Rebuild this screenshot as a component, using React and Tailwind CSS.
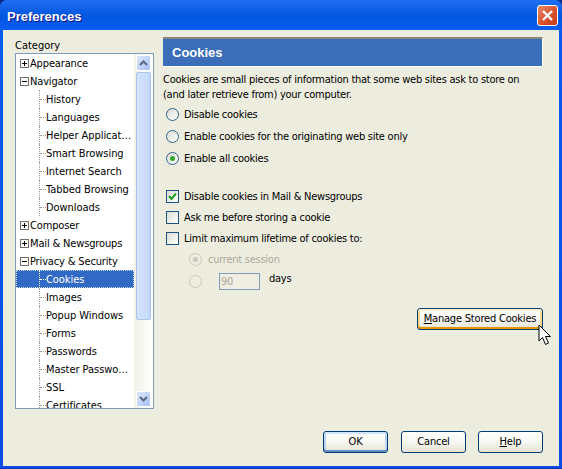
function Radio({ on, off }) {
  return (
    <span className={`relative block w-[13px] h-[13px] rounded-full border shrink-0 ${off ? "border-[#cac8bb] bg-[#ededdf]" : "border-[#2c628b] bg-gradient-to-br from-[#dcdcd3] to-white"}`}>
      {on && <span className={`absolute left-[3px] top-[3px] w-[5px] h-[5px] rounded-full ${off ? "bg-[#cac8bb]" : "bg-[#2fa82f]"}`} />}
    </span>
  );
}

function Check({ on }) {
  return (
    <span className="block w-[13px] h-[13px] border border-[#1c5180] bg-gradient-to-br from-[#dcdcd3] to-white shrink-0">
      {on && (
        <svg viewBox="0 0 11 11" className="w-[11px] h-[11px]">
          <path d="M2 5 L4.5 8 L9 2.5" fill="none" stroke="#21a121" strokeWidth="2" />
        </svg>
      )}
    </span>
  );
}

function Btn({ children, className = "" }) {
  return (
    <button className={`h-[22px] rounded-[3px] border border-[#003c74] text-[11px] text-black tracking-[-0.2px] bg-gradient-to-b from-white via-[#f7f7f2] to-[#e6e3d4] flex items-center justify-center whitespace-nowrap ${className}`}>
      {children}
    </button>
  );
}

function Box({ plus }) {
  return (
    <span className="relative block w-[9px] h-[9px] border border-[#6f6f6f] bg-white shrink-0">
      <span className="absolute left-[1px] top-[3px] w-[5px] h-px bg-black" />
      {plus && <span className="absolute left-[3px] top-[1px] w-px h-[5px] bg-black" />}
    </span>
  );
}

function Parent({ label, plus }) {
  return (
    <div className="h-[18px] flex items-center pl-[4px] gap-[1px] text-black">
      <Box plus={plus} />
      <span className="whitespace-nowrap pt-[2px] tracking-[-0.15px]">{label}</span>
    </div>
  );
}

function Child({ label, selected }) {
  return (
    <div className={`h-[18px] flex items-center ${selected ? "bg-[#316ac5] text-white outline-1 -outline-offset-1 outline-dotted outline-[#c9d8f0]" : "text-black"}`}>
      <span className="w-[23px] h-full shrink-0" />
      <span className={`w-[7px] h-full shrink-0 border-l border-dotted ${selected ? "border-white" : "border-[#a0a0a0]"} relative`}>
        <span className={`absolute left-0 top-[9px] w-[6px] border-t border-dotted ${selected ? "border-white" : "border-[#a0a0a0]"}`} />
      </span>
      <span className="whitespace-nowrap pt-[2px] tracking-[-0.05px]">{label}</span>
    </div>
  );
}

function Scrollbar() {
  const arrow = (d) => (
    <span className="block w-[15px] h-[16px] rounded-[2px] border border-white bg-gradient-to-br from-[#dce7fd] to-[#a9c3f3] flex items-center justify-center shrink-0">
      <svg viewBox="0 0 9 6" className="w-[9px] h-[6px]">
        <path d={d} fill="none" stroke="#5a6a80" strokeWidth="2" />
      </svg>
    </span>
  );
  return (
    <div className="w-[19px] h-full bg-gradient-to-r from-[#f1f1e8] to-white flex flex-col items-start pl-[2px] py-[1px] shrink-0">
      {arrow("M1 5 L4.5 1.5 L8 5")}
      <div className="w-[15px] h-[248px] mt-px rounded-[2px] border border-[#a9c3ef] bg-gradient-to-r from-[#d5e3fd] to-[#c6d9fb] shrink-0" />
      <div className="flex-1" />
      {arrow("M1 1 L4.5 4.5 L8 1")}
    </div>
  );
}

export default function App() {
  return (
    <div className="w-[562px] h-[469px] bg-[#0a2a8a]">
      <div className="font-['DejaVu_Sans_Condensed','DejaVu_Sans',sans-serif] w-full h-full bg-gradient-to-b from-[#0a5cf0] to-[#0a4be6] rounded-t-[7px] flex flex-col overflow-hidden text-[11px] text-black border-b border-b-[#0a2fb8]">
        <div className="h-[30px] shrink-0 bg-gradient-to-b from-[#1f6ff0] via-[#0256e0] to-[#0a5cf0] flex items-center justify-between pl-[7px] pr-[4px]">
          <span className="font-['Liberation_Sans',sans-serif] text-white font-bold text-[13px] pt-[3px] [text-shadow:1px_1px_#0f1089]">Preferences</span>
          <span className="w-[21px] h-[21px] rounded-[3px] border border-white bg-gradient-to-br from-[#e68b6c] via-[#d9562f] to-[#c63a15] flex items-center justify-center">
            <svg viewBox="0 0 13 13" className="w-[13px] h-[13px]">
              <path d="M2 2 L11 11 M11 2 L2 11" stroke="white" strokeWidth="2.4" />
            </svg>
          </span>
        </div>

        <div className="mx-[3px] mb-[2px] flex-1 min-h-0 bg-[#ededdf] flex flex-col pl-[12px] pr-[16px]">
          <div className="flex gap-[9px] pt-[7px]">
            <div className="w-[139px] shrink-0 pt-[1px]">
              <div className="h-[15px] leading-[15px]">Category</div>
              <div className="h-[356px] border border-[#7f9db9] bg-white flex overflow-hidden">
                <div className="flex-1 min-w-0 overflow-hidden">
                  <Parent label="Appearance" plus />
                  <Parent label="Navigator" />
                  <Child label="History" />
                  <Child label="Languages" />
                  <Child label="Helper Applicat…" />
                  <Child label="Smart Browsing" />
                  <Child label="Internet Search" />
                  <Child label="Tabbed Browsing" />
                  <Child label="Downloads" />
                  <Parent label="Composer" plus />
                  <Parent label="Mail & Newsgroups" plus />
                  <Parent label="Privacy & Security" />
                  <Child label="Cookies" selected />
                  <Child label="Images" />
                  <Child label="Popup Windows" />
                  <Child label="Forms" />
                  <Child label="Passwords" />
                  <Child label="Master Passwo…" />
                  <Child label="SSL" />
                  <Child label="Certificates" />
                </div>
                <Scrollbar />
              </div>
            </div>

            <div className="flex-1 min-w-0 tracking-[-0.25px]">
              <div className="h-[30px] bg-[#3b6db8] border-t-2 border-t-[#8a867a] border-b border-b-white border-r border-r-white flex items-center pl-[9px] text-white font-bold text-[13px] tracking-normal font-['Liberation_Sans',sans-serif]">
                Cookies
              </div>
              <p className="mt-[5px] leading-[15px] whitespace-nowrap">
                Cookies are small pieces of information that some web sites ask to store on<br />
                (and later retrieve from) your computer.
              </p>
              <div className="mt-[6px] pl-[3px] flex flex-col gap-[9px]">
                <label className="flex items-center h-[13px] gap-[5px]"><Radio /><span className="pt-[1px]">Disable cookies</span></label>
                <label className="flex items-center h-[13px] gap-[5px]"><Radio /><span className="pt-[1px]">Enable cookies for the originating web site only</span></label>
                <label className="flex items-center h-[13px] gap-[5px]"><Radio on /><span className="pt-[1px]">Enable all cookies</span></label>
              </div>
              <div className="mt-[25px] pl-[3px] flex flex-col gap-[8px]">
                <label className="flex items-center h-[13px] gap-[5px]"><Check on /><span className="pt-[1px]">Disable cookies in Mail & Newsgroups</span></label>
                <label className="flex items-center h-[13px] gap-[5px]"><Check /><span className="pt-[1px]">Ask me before storing a cookie</span></label>
                <label className="flex items-center h-[13px] gap-[5px]"><Check /><span className="pt-[1px]">Limit maximum lifetime of cookies to:</span></label>
              </div>
              <div className="mt-[8px] pl-[26px] flex flex-col gap-[9px]">
                <label className="flex items-center h-[13px] gap-[6px] text-[#aca899]"><Radio on off /><span className="pt-[1px]">current session</span></label>
                <label className="flex items-center h-[13px]">
                  <Radio off />
                  <span className="ml-[17px] w-[41px] h-[17px] border border-[#7f9db9] bg-[#f0eee2] text-[#aca899] pl-[1px] leading-[16px]">90</span>
                  <span className="ml-[9px] -mt-[5px]">days</span>
                </label>
              </div>
              <div className="mt-[20px] flex justify-end">
                <Btn className="w-[126px] relative shadow-[inset_0_2px_0_#fff0cf,inset_0_-2px_0_#e59700,inset_2px_0_0_#fbd98f,inset_-2px_0_0_#fbd98f]">
                  <span><span className="underline">M</span>anage Stored Cookies</span>
                  <svg viewBox="0 0 14 22" className="absolute left-[120px] top-[15px] w-[14px] h-[22px]">
                    <path d="M1 1 L1 17 L4.5 13.5 L7.5 20.5 L10.5 19 L7.5 12.5 L12.5 12.5 Z" fill="white" stroke="black" strokeWidth="1" />
                  </svg>
                </Btn>
              </div>
            </div>
          </div>

          <div className="flex justify-end gap-[12px] mt-[22px]">
            <Btn className="w-[65px] mr-px shadow-[inset_0_2px_0_#cee7ff,inset_0_-2px_0_#698cc9,inset_2px_0_0_#bcd4f6,inset_-2px_0_0_#bcd4f6]">OK</Btn>
            <Btn className="w-[65px]">Cancel</Btn>
            <Btn className="w-[65px]"><span><span className="underline">H</span>elp</span></Btn>
          </div>
        </div>
      </div>
    </div>
  );
}
